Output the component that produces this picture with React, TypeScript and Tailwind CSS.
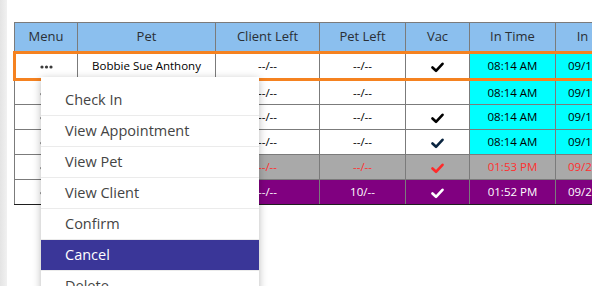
import React from "react";

type Row = {
  pet: string;
  clientLeft: string;
  petLeft: string;
  vac: "" | "black" | "navy" | "red" | "white";
  inTime: string;
  inDate: string;
  tone: "white" | "gray" | "purple";
};

const ROWS: Row[] = [
  { pet: "Bobbie Sue Anthony", clientLeft: "--/--", petLeft: "--/--", vac: "black", inTime: "08:14 AM", inDate: "09/19/2023", tone: "white" },
  { pet: "Lucky Brown", clientLeft: "--/--", petLeft: "--/--", vac: "", inTime: "08:14 AM", inDate: "09/19/2023", tone: "white" },
  { pet: "Max Carter", clientLeft: "--/--", petLeft: "--/--", vac: "black", inTime: "08:14 AM", inDate: "09/19/2023", tone: "white" },
  { pet: "Daisy Evans", clientLeft: "--/--", petLeft: "--/--", vac: "navy", inTime: "08:14 AM", inDate: "09/19/2023", tone: "white" },
  { pet: "Rocky Miller", clientLeft: "--/--", petLeft: "--/--", vac: "red", inTime: "01:53 PM", inDate: "09/20/2023", tone: "gray" },
  { pet: "Bella Stone", clientLeft: "--/--", petLeft: "10/--", vac: "white", inTime: "01:52 PM", inDate: "09/20/2023", tone: "purple" },
];

const MENU = ["Check In", "View Appointment", "View Pet", "View Client", "Confirm", "Cancel", "Delete"];

const FONT = { fontFamily: "'Open Sans', 'Liberation Sans', sans-serif" };

function Check({ color }: { color: string }) {
  return (
    <svg width="13" height="11" viewBox="0 0 13 11" className="inline-block align-middle">
      <path d="M1.5 5.5 L5 8.8 L11.5 1.8" fill="none" stroke={color} strokeWidth="2.6" strokeLinecap="round" strokeLinejoin="round" />
    </svg>
  );
}

function Dots() {
  return (
    <svg width="13" height="4" viewBox="0 0 13 4" className="inline-block align-middle">
      <circle cx="2" cy="2" r="1.6" fill="#3a3a3a" />
      <circle cx="6.5" cy="2" r="1.6" fill="#3a3a3a" />
      <circle cx="11" cy="2" r="1.6" fill="#3a3a3a" />
    </svg>
  );
}

const VAC_COLOR = { black: "#000000", navy: "#0a2540", red: "#ff2a2a", white: "#ffffff" };

export default function App() {
  return (
    <div className="relative w-[592px] h-[286px] overflow-hidden bg-white flex" style={FONT}>
      <div className="w-[7px] shrink-0 h-full bg-gradient-to-r from-[#e4e4e4] to-[#f1f1f1]" />

      <div className="shrink-0 pl-[6px] pt-[22px]">
        <table className="table-fixed border-collapse w-[713px] text-[11.5px] text-black">
          <colgroup>
            <col className="w-[63px]" />
            <col className="w-[138px]" />
            <col className="w-[104px]" />
            <col className="w-[86px]" />
            <col className="w-[64px]" />
            <col className="w-[86px]" />
            <col className="w-[86px]" />
            <col className="w-[86px]" />
          </colgroup>
          <thead>
            <tr className="h-[30px] bg-[#8bbfee] text-[13px] text-[#2a2f35]">
              {["Menu", "Pet", "Client Left", "Pet Left", "Vac", "In Time", "In Date", "Out Time"].map((h) => (
                <th key={h} className="border border-[#7b7b7b] font-normal text-center">{h}</th>
              ))}
            </tr>
          </thead>
          <tbody>
            {ROWS.map((r, i) => {
              const first = i === 0;
              const last = i === ROWS.length - 1;
              const edge = first
                ? "border-y-[3px] border-y-[#f58220] border-x border-x-[#7b7b7b]"
                : last
                  ? "border border-[#7b7b7b] border-b-[#1e1e1e]"
                  : "border border-[#7b7b7b]";
              const tone =
                r.tone === "gray" ? "bg-[#a9a9a9] text-[#ff3030]" : r.tone === "purple" ? "bg-[#800080] text-white" : "bg-white text-black";
              const timeTone = r.tone === "white" ? "bg-[#00ffff] text-black" : tone;
              return (
                <tr key={i} className={first ? "h-[27px]" : "h-[25px]"}>
                  <td className={`${edge} ${first ? "border-l-[3px] border-l-[#f58220]" : ""} bg-white text-center`}>
                    <Dots />
                  </td>
                  <td className={`${edge} ${tone} text-center`}>{r.pet}</td>
                  <td className={`${edge} ${tone} text-center`}>{r.clientLeft}</td>
                  <td className={`${edge} ${tone} text-center`}>{r.petLeft}</td>
                  <td className={`${edge} ${tone} text-center`}>
                    {r.vac ? <Check color={VAC_COLOR[r.vac]} /> : null}
                  </td>
                  <td className={`${edge} ${timeTone} text-center`}>{r.inTime}</td>
                  <td className={`${edge} ${timeTone} text-center`}>{r.inDate}</td>
                  <td className={`${edge} ${tone} text-center`}>--:--</td>
                </tr>
              );
            })}
          </tbody>
        </table>
      </div>

      {/* context menu */}
      <div className="absolute left-[41px] top-[77px] w-[218px] bg-white pt-[8px] shadow-[0_2px_8px_rgba(0,0,0,0.28)]">
        {MENU.map((m) => (
          <div
            key={m}
            className={`h-[31px] flex items-center pl-[24px] border-b border-[#ebebeb] text-[14.5px] ${
              m === "Cancel" ? "bg-[#3a3698] text-white" : "text-[#444]"
            }`}
          >
            {m}
          </div>
        ))}
      </div>
    </div>
  );
}
